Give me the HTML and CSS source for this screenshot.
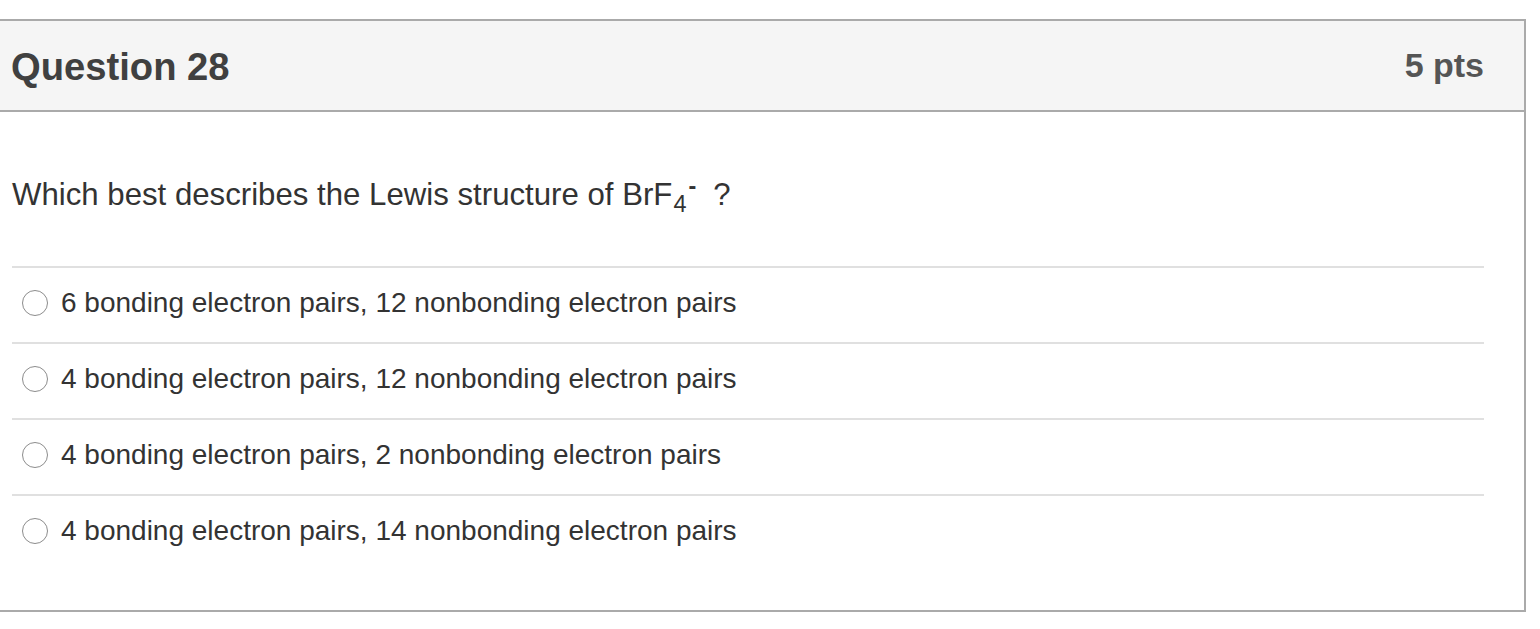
FILE: index.html
```html
<!DOCTYPE html>
<html lang="en">
<head>
<meta charset="utf-8">
<title>Question 28</title>
<link rel="stylesheet" href="styles.css">
</head>
<body>
<div class="question">
  <div class="header">
    <h2 class="title">Question 28</h2>
    <div class="pts">5 pts</div>
  </div>
  <div class="content">
    <p class="prompt">Which best describes the Lewis structure of BrF<span class="sub">4</span><span class="sup">-</span><span class="q">?</span></p>
    <div class="answers">
      <label class="answer"><span class="radio"></span><span class="atext">6 bonding electron pairs, 12 nonbonding electron pairs</span></label>
      <label class="answer"><span class="radio"></span><span class="atext">4 bonding electron pairs, 12 nonbonding electron pairs</span></label>
      <label class="answer"><span class="radio"></span><span class="atext">4 bonding electron pairs, 2 nonbonding electron pairs</span></label>
      <label class="answer"><span class="radio"></span><span class="atext">4 bonding electron pairs, 14 nonbonding electron pairs</span></label>
    </div>
  </div>
</div>
</body>
</html>
```
FILE: styles.css
```css
html, body {
  margin: 0;
  padding: 0;
  background: #ffffff;
}
body {
  font-family: "Liberation Sans", Arial, sans-serif;
  color: #333333;
}
.question {
  margin: 19px 14px 0 -2px;
  border: 2px solid #aaaaaa;
  box-sizing: border-box;
}
.header {
  height: 91px;
  box-sizing: border-box;
  background: #f5f5f5;
  border-bottom: 2px solid #aaaaaa;
  display: flex;
  justify-content: space-between;
  align-items: flex-start;
  padding: 24px 40px 0 11px;
}
.title {
  margin: 0;
  font-size: 38.2px;
  font-weight: bold;
  line-height: normal;
  color: #404040;
}
.pts {
  font-size: 34px;
  font-weight: bold;
  line-height: normal;
  color: #555555;
  margin-top: 1px;
}
.content {
  padding: 0 40px 40px 12px;
}
.prompt {
  margin: 65px 0 53px 0;
  font-size: 31.2px;
  line-height: 36px;
  color: #333333;
}
.sub {
  font-size: 0.75em;
  vertical-align: -0.3em;
  line-height: 0;
  margin-left: 1px;
}
.sup {
  font-size: 0.75em;
  font-weight: bold;
  vertical-align: 0.45em;
  line-height: 0;
  margin-left: 2px;
}
.q {
  margin-left: 17px;
}
.answers {
  display: flex;
  flex-direction: column;
}
.answer {
  display: flex;
  align-items: center;
  height: 76px;
  box-sizing: border-box;
  border-top: 2px solid #e0e0e0;
  padding: 0 0 4px 10px;
  gap: 13px;
}
.radio {
  width: 26px;
  height: 26px;
  box-sizing: border-box;
  border: 1px solid #8c8c8c;
  border-radius: 50%;
  background: #ffffff;
  flex: none;
}
.atext {
  font-size: 28px;
  line-height: 32px;
  color: #333333;
}
```
